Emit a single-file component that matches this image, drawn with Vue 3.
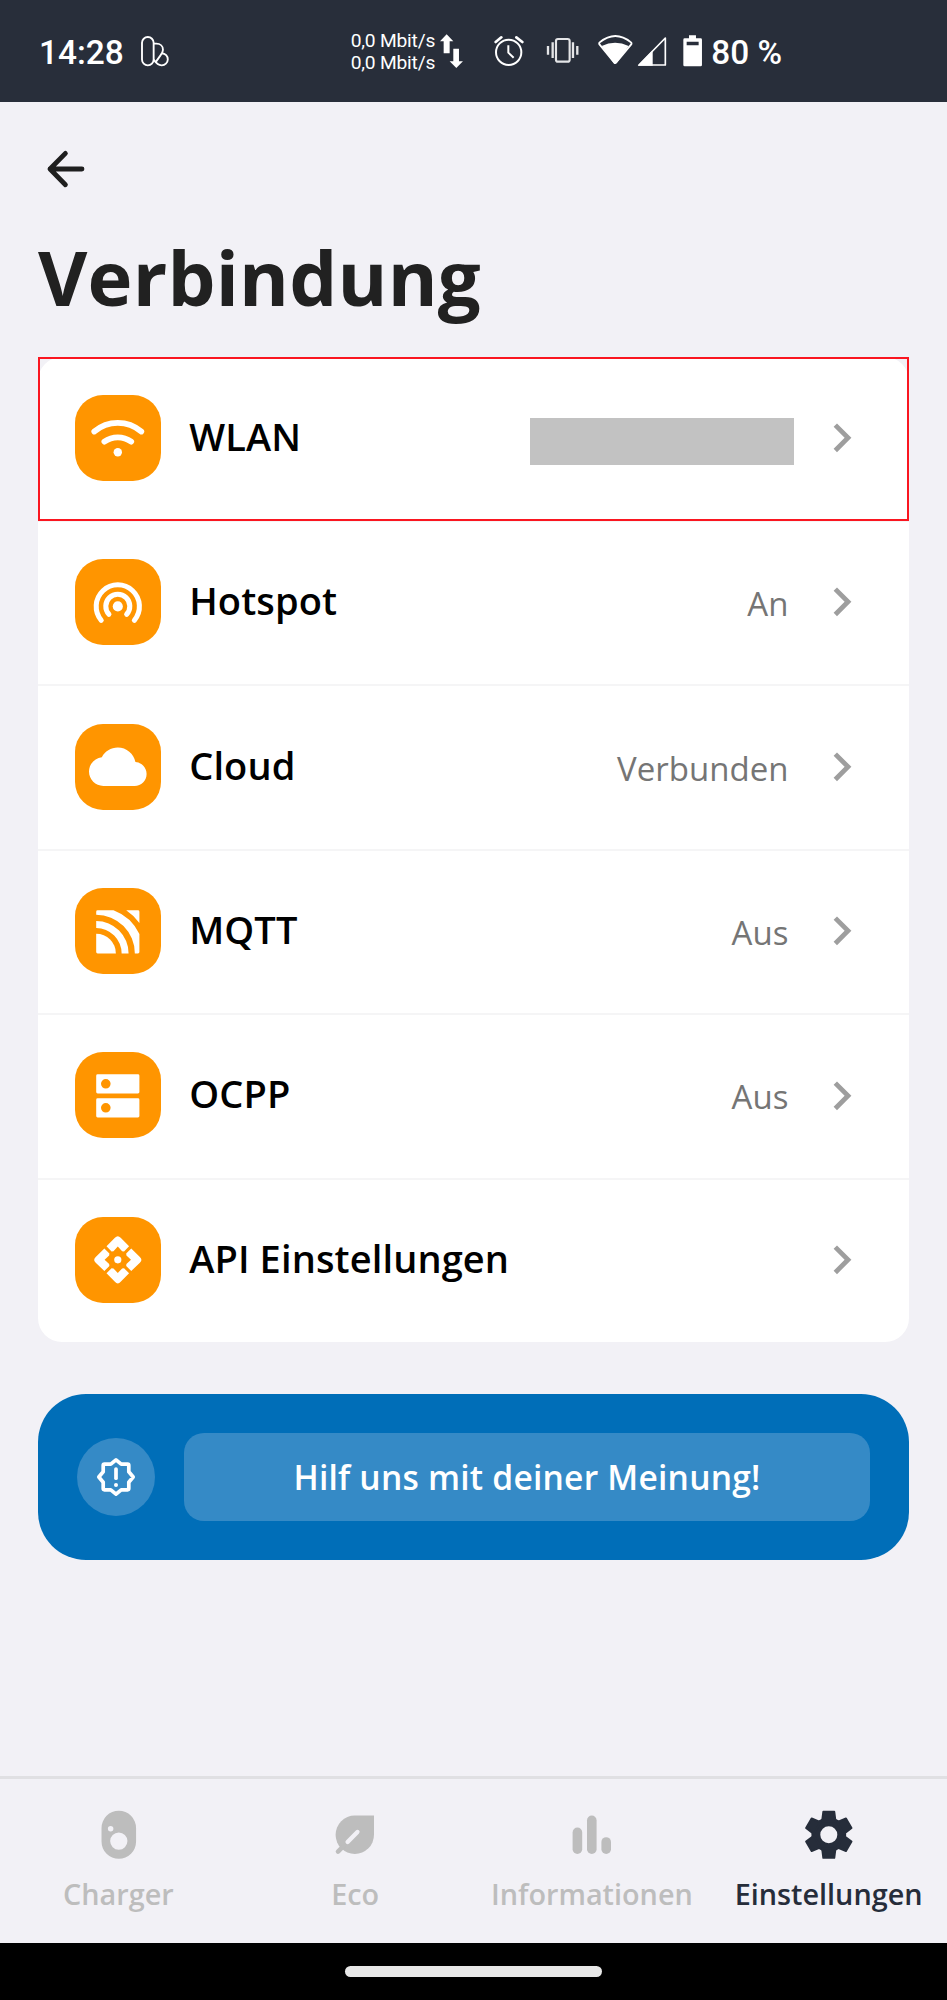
<script setup>
const rows = [
  { id: 'wifi', label: 'WLAN', hidden: true },
  { id: 'hotspot', label: 'Hotspot', value: 'An' },
  { id: 'cloud', label: 'Cloud', value: 'Verbunden' },
  { id: 'mqtt', label: 'MQTT', value: 'Aus' },
  { id: 'ocpp', label: 'OCPP', value: 'Aus' },
  { id: 'api', label: 'API Einstellungen' },
]
const tabs = [
  { id: 'charger', label: 'Charger' },
  { id: 'eco', label: 'Eco' },
  { id: 'info', label: 'Informationen' },
  { id: 'settings', label: 'Einstellungen', active: true },
]
const quarters = [0, 90, 180, 270]
const teeth = [0, 60, 120, 180, 240, 300]
</script>

<template>
  <div class="screen">
    <header class="status">
      <span class="clock">14:28</span>
      <svg class="s-app" viewBox="420 105 88 96" fill="none" stroke="#fff" stroke-width="5.6">
        <rect x="426" y="111" width="35" height="85" rx="17.5" />
        <path d="M461 131h8c12 0 20 8 20 18 0 8-4 13-8 18l-15 21" />
        <path d="M486 160a18 18 0 0 1-1 36c-10 0-14-5-24-17" />
      </svg>
      <div class="net"><span>0,0 Mbit/s</span><span>0,0 Mbit/s</span></div>
      <svg class="s-arrows" viewBox="1323 100 70 103" fill="#fff">
        <path d="M1343 101l20 21h-11v36h-18v-36h-11zM1363 144h17v38h12l-20 20-20-20h11z" />
      </svg>
      <svg class="s-alarm" viewBox="62 105 90 96" fill="none" stroke="#fff">
        <circle cx="106" cy="157" r="38" stroke-width="6" />
        <path d="M105 136v22l16 15" stroke-width="6" />
        <path d="M67 126l17-14M129 112l18 14" stroke-width="8" stroke-linecap="round" />
      </svg>
      <svg class="s-vib" viewBox="218 105 100 96" fill="none" stroke="#e4e5e7">
        <rect x="248" y="117" width="41" height="68" rx="6" stroke-width="6.5" />
        <path d="M224 138v26M238 127v47M299 127v47M312 138v26" stroke-width="7" />
      </svg>
      <svg class="s-wifi" viewBox="374 102 104 96">
        <path d="M379 127Q426 89 473 127q3 3 0 7l-45 54q-3 3-5 0l-44-54q-3-4 0-7z" fill="none" stroke="#fff" stroke-width="5.4" />
        <path d="M385 138Q425 118 466 138L430 189q-5 5-9 0z" fill="#fff" />
      </svg>
      <svg class="s-signal" viewBox="492 108 90 92">
        <path d="M577 114v81h-79z" fill="none" stroke="#fff" stroke-width="5" stroke-linejoin="round" />
        <path d="M494 197l45-46v46z" fill="#fff" />
      </svg>
      <svg class="s-battery" viewBox="629 104 58 96">
        <path fill-rule="evenodd" fill="#fff" d="M647 105h21v9h14q4 0 4 4v76q0 4-4 4h-48q-4 0-4-4v-76q0-4 4-4h13zM640 124v11h36v-11z" />
      </svg>
      <span class="percent">80 %</span>
    </header>

    <main class="content">
      <svg class="back" viewBox="0 0 40 40" fill="none" stroke="#1f1f1f" stroke-width="4.8" stroke-linecap="round" stroke-linejoin="round">
        <path d="M36 20H4M19.4 4.4L4 20l15.4 15.7" />
      </svg>
      <h1>Verbindung</h1>

      <section class="card">
        <div v-for="row in rows" :key="row.id" class="row" :class="{ marked: row.hidden }">
          <div class="tile">
            <svg viewBox="0 0 24 24" fill="#fff">
              <g v-if="row.id === 'wifi'" fill="none" stroke="#fff" stroke-width="2.4" stroke-linecap="round">
                <path d="M2.2 9.4A15.1 15.1 0 0 1 21.8 9.4M6.4 13.6A9.6 9.6 0 0 1 17.6 13.6" />
                <circle cx="12" cy="18" r="1.75" fill="#fff" stroke="none" />
              </g>
              <g v-else-if="row.id === 'hotspot'" fill="none" stroke="#fff" stroke-width="2.1" stroke-linecap="round">
                <circle cx="12" cy="13.5" r="2.1" fill="#fff" stroke="none" />
                <path d="M8.3 16.8A5 5 0 1 1 15.7 16.8" />
                <path d="M5.1 19.3A9 9 0 1 1 18.9 19.3" />
              </g>
              <path v-else-if="row.id === 'cloud'" d="M19.35 10.04C18.67 6.59 15.64 4 12 4 9.11 4 6.6 5.64 5.35 8.04 2.34 8.36 0 10.91 0 14c0 3.31 2.69 6 6 6h13c2.76 0 5-2.24 5-5 0-2.64-2.05-4.78-4.65-4.96z" />
              <g v-else-if="row.id === 'mqtt'">
                <path d="M3 12.8A8.2 8.2 0 0 1 11.2 21H3.6a.6.6 0 0 1-.6-.6z" />
                <path d="M3 7.5A13.5 13.5 0 0 1 16.5 21h-2.9A10.6 10.6 0 0 0 3 10.4z" />
                <path d="M3 3.6a.6.6 0 0 1 .6-.6h6.6A19.5 19.5 0 0 1 21 12.9v7.5a.6.6 0 0 1-.6.6h-1.3A16.1 16.1 0 0 0 3 4.9z" />
                <path d="M15.5 3h4.9a.6.6 0 0 1 .6.6v4.7A22 22 0 0 0 15.5 3z" />
              </g>
              <path v-else-if="row.id === 'ocpp'" fill-rule="evenodd" d="M3.6 3h16.8a.6.6 0 0 1 .6.6v6.8a.6.6 0 0 1-.6.6H3.6a.6.6 0 0 1-.6-.6V3.6a.6.6 0 0 1 .6-.6zM7 5a2 2 0 1 0 0 4 2 2 0 0 0 0-4zM3.6 13h16.8a.6.6 0 0 1 .6.6v6.8a.6.6 0 0 1-.6.6H3.6a.6.6 0 0 1-.6-.6v-6.8a.6.6 0 0 1 .6-.6zM7 15a2 2 0 1 0 0 4 2 2 0 0 0 0-4z" />
              <g v-else>
                <circle cx="12" cy="12" r="1.5" />
                <path v-for="a in quarters" :key="a" :transform="`rotate(${a} 12 12)`" d="M12 6.5l1.8 1.9.8.1 2.1-2.1-3.5-3.6q-1.2-1.3-2.4 0L7.3 6.4l2.1 2.1.8-.1z" />
              </g>
            </svg>
          </div>
          <span class="label">{{ row.label }}</span>
          <span v-if="row.hidden" class="redacted"></span>
          <span v-if="row.value" class="value">{{ row.value }}</span>
          <svg class="chevron" viewBox="0 0 24 24" fill="#9e9e9e">
            <path d="M8.59 16.59 13.17 12 8.59 7.41 10 6l6 6-6 6z" />
          </svg>
        </div>
      </section>

      <section class="banner">
        <div class="badge">
          <svg viewBox="-20 -20 40 40" fill="none" stroke="#fff" stroke-width="3.7" stroke-linejoin="round" stroke-linecap="round">
            <path d="M-5.2-12.8L0-17.2 5.2-12.8H11.6q1.2 0 1.2 1.2V-5.2L17.2 0 12.8 5.2V11.6q0 1.2-1.2 1.2H5.2L0 17.2-5.2 12.8H-11.6q-1.2 0-1.2-1.2V5.2L-17.2 0-12.8-5.2V-11.6q0-1.2 1.2-1.2z" />
            <path d="M0-8V1.2" />
            <circle cx="0" cy="8" r="2" fill="#fff" stroke="none" />
          </svg>
        </div>
        <div class="feedback"><span>Hilf uns mit deiner Meinung!</span></div>
      </section>
    </main>

    <nav class="tabs">
      <div v-for="tab in tabs" :key="tab.id" class="tab" :class="{ active: tab.active }">
        <svg viewBox="0 0 24 24" fill="currentColor">
          <path v-if="tab.id === 'charger'" fill-rule="evenodd" d="M12 2a7.2 7.2 0 0 1 7.2 7.2v5.6a7.2 7.2 0 0 1-14.4 0V9.2A7.2 7.2 0 0 1 12 2zM12 11a3.6 3.6 0 1 0 0 7.2 3.6 3.6 0 0 0 0-7.2zM8.6 8.3a1.15 1.15 0 1 0 0 2.3 1.15 1.15 0 0 0 0-2.3z" />
          <g v-else-if="tab.id === 'eco'" fill="none" stroke-linecap="round">
            <path fill="currentColor" d="M12 4h8v8a8 8 0 1 1-8-8z" />
            <path stroke="currentColor" stroke-width="1.9" d="M5 19l3-3" />
            <path class="vein" stroke-width="1.8" d="M13.1 10.8L9 15" />
          </g>
          <g v-else-if="tab.id === 'info'">
            <rect x="4" y="9" width="4" height="11" rx="2" />
            <rect x="10" y="4" width="4" height="16" rx="2" />
            <rect x="16" y="13" width="4" height="7" rx="2" />
          </g>
          <g v-else stroke="currentColor" stroke-linejoin="round">
            <circle cx="12" cy="12" r="5.4" fill="none" stroke-width="3.7" />
            <path v-for="a in teeth" :key="a" :transform="`rotate(${a} 12 12)`" stroke-width=".8" d="M9.7 2.4h4.6L14.8 6.4H9.2z" />
          </g>
        </svg>
        <span>{{ tab.label }}</span>
      </div>
    </nav>
    <footer class="gesture"><i></i></footer>
  </div>
</template>

<style>
body {
  margin: 0;
}
</style>

<style scoped>
.screen {
  width: 947px;
  height: 2000px;
  display: flex;
  flex-direction: column;
  overflow: hidden;
  background: #f2f1f6;
  font-family: "Open Sans", "Noto Sans", sans-serif;
}
svg {
  display: block;
  flex: none;
}
.status {
  box-sizing: border-box;
  flex: none;
  height: 101.6px;
  padding-left: 39px;
  display: flex;
  align-items: flex-start;
  background: #282e3a;
  color: #fff;
  font-family: Roboto, sans-serif;
  white-space: nowrap;
}
.clock,
.percent {
  font-size: 33.4px;
  line-height: 40px;
  font-weight: 500;
  margin-top: 33px;
}
.clock {
  width: 101px;
}
.s-app {
  width: 29.3px;
  height: 32px;
  margin-top: 35px;
}
.net {
  width: 86px;
  margin: 30px 0 0 181.4px;
  display: flex;
  flex-direction: column;
  font-size: 19.2px;
  line-height: 22px;
  letter-spacing: -0.2px;
}
.s-arrows {
  width: 23.3px;
  height: 34.3px;
  margin: 33.6px 0 0 3.7px;
}
.s-alarm {
  width: 30px;
  height: 32px;
  margin: 35px 0 0 30.4px;
}
.s-vib {
  width: 33.3px;
  height: 32px;
  margin: 35px 0 0 22px;
}
.s-wifi {
  width: 34.7px;
  height: 32px;
  margin: 34px 0 0 18.7px;
}
.s-signal {
  width: 30px;
  height: 30.7px;
  margin: 36px 0 0 4.6px;
}
.s-battery {
  width: 19.3px;
  height: 32px;
  margin: 34.7px 0 0 15.7px;
}
.percent {
  margin-left: 9px;
}
.content {
  flex: 1;
  padding: 47.4px 38px 0;
}
.back {
  width: 40px;
  height: 40px;
  margin-left: 8px;
}
h1 {
  margin: 38px 0 29.6px;
  font-size: 76px;
  line-height: 100px;
  font-weight: 700;
  letter-spacing: 0.2px;
  color: #212121;
}
.card {
  background: #fff;
  border-radius: 24px;
}
.row {
  box-sizing: border-box;
  height: 164.4px;
  padding: 0 38px 2px 37.2px;
  border-top: 2px solid #f5f5f6;
  display: flex;
  align-items: center;
}
.row.marked {
  position: relative;
  height: 163.4px;
  border: 0;
  padding-bottom: 1px;
}
.row.marked::after {
  content: "";
  position: absolute;
  inset: 0 0 -1px;
  border: 2px solid #fa1620;
}
.tile {
  flex: none;
  width: 86px;
  height: 86px;
  border-radius: 28px;
  background: #ff9500;
  display: flex;
  align-items: center;
  justify-content: center;
}
.tile svg {
  width: 57.6px;
  height: 57.6px;
  margin-top: 1px;
}
.label {
  flex: 1;
  margin-left: 28px;
  padding-bottom: 4px;
  font-size: 38px;
  line-height: 50px;
  font-weight: 600;
  letter-spacing: 0.12px;
  color: #000;
}
.value {
  padding-top: 4px;
  margin-right: 25px;
  font-size: 33px;
  line-height: 46px;
  color: #757575;
}
.redacted {
  width: 264px;
  height: 47.4px;
  margin: 8px 19px 0 0;
  background: #c2c2c2;
}
.chevron {
  width: 57.6px;
  height: 57.6px;
}
.banner {
  box-sizing: border-box;
  height: 166.4px;
  margin-top: 52px;
  padding: 0 38.6px;
  border-radius: 48px;
  background: #006eb8;
  display: flex;
  align-items: center;
}
.badge {
  width: 78px;
  height: 78px;
  border-radius: 50%;
  background: #358ac6;
  display: flex;
  align-items: center;
  justify-content: center;
}
.badge svg {
  width: 40px;
  height: 40px;
}
.feedback {
  flex: 1;
  height: 87.4px;
  margin-left: 29px;
  border-radius: 20px;
  background: #358ac6;
  display: flex;
  align-items: center;
  justify-content: center;
}
.feedback span {
  font-size: 33.6px;
  line-height: 46px;
  font-weight: 600;
  letter-spacing: 0.22px;
  color: #fff;
}
.tabs {
  box-sizing: border-box;
  flex: none;
  height: 167px;
  border-top: 3px solid #e0e0e3;
  display: grid;
  grid-template-columns: repeat(4, 1fr);
}
.tab {
  padding-top: 27.4px;
  display: flex;
  flex-direction: column;
  align-items: center;
  color: #bdbdbd;
}
.tab.active {
  color: #262d3a;
}
.tab svg {
  width: 57.6px;
  height: 57.6px;
}
.tab span {
  margin-top: 10.8px;
  font-size: 28.8px;
  line-height: 40px;
  font-weight: 600;
}
.vein {
  stroke: #f2f1f6;
}
.gesture {
  flex: none;
  height: 57.3px;
  background: #000;
  display: flex;
  justify-content: center;
}
.gesture i {
  width: 256.4px;
  height: 10.4px;
  margin-top: 23.6px;
  border-radius: 6px;
  background: #e8e8e8;
}
</style>
